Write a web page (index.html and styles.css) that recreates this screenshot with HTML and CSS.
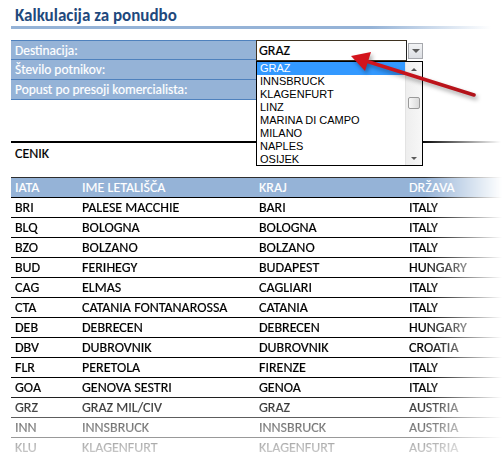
FILE: index.html
```html
<!DOCTYPE html>
<html lang="sl">
<head>
    <meta charset="UTF-8">
    <meta name="viewport" content="width=device-width, initial-scale=1.0">
    <title>Kalkulacija za ponudbo</title>
    <link rel="stylesheet" href="styles.css">
</head>
<body>
    <div class="sheet">
        <!-- Naslov z modro črto -->
        <h1 class="title">Kalkulacija za ponudbo</h1>
        <div class="title-rule"></div>

        <!-- Vnosna polja za kalkulacijo -->
        <div class="calc">
            <div class="calc-label">Destinacija:</div>
            <div class="calc-value">
                <div class="combo">
                    <div class="combo-input">GRAZ</div>
                    <div class="combo-btn"><span class="tri-down"></span></div>
                </div>
            </div>
            <div class="calc-label">Število potnikov:</div>
            <div class="calc-value"></div>
            <div class="calc-label">Popust po presoji komercialista:</div>
            <div class="calc-value"></div>

            <!-- Odprt spustni seznam -->
            <div class="list">
                <ul class="list-items">
                    <li class="selected">GRAZ</li>
                    <li>INNSBRUCK</li>
                    <li>KLAGENFURT</li>
                    <li>LINZ</li>
                    <li>MARINA DI CAMPO</li>
                    <li>MILANO</li>
                    <li>NAPLES</li>
                    <li>OSIJEK</li>
                </ul>
                <div class="list-scroll">
                    <span class="tri-up"></span>
                    <div class="thumb"></div>
                    <span class="tri-down small"></span>
                </div>
            </div>
        </div>

        <div class="black-rule"></div>
        <div class="caption">CENIK</div>

        <!-- Cenik letališč -->
        <div class="price">
            <table class="price-table">
                <colgroup>
                    <col class="c-iata">
                    <col class="c-name">
                    <col class="c-city">
                    <col class="c-country">
                </colgroup>
                <thead>
                    <tr><th>IATA</th><th>IME LETALIŠČA</th><th>KRAJ</th><th>DRŽAVA</th></tr>
                </thead>
                <tbody>
                    <tr><td>BRI</td><td>PALESE MACCHIE</td><td>BARI</td><td>ITALY</td></tr>
                    <tr><td>BLQ</td><td>BOLOGNA</td><td>BOLOGNA</td><td>ITALY</td></tr>
                    <tr><td>BZO</td><td>BOLZANO</td><td>BOLZANO</td><td>ITALY</td></tr>
                    <tr><td>BUD</td><td>FERIHEGY</td><td>BUDAPEST</td><td>HUNGARY</td></tr>
                    <tr><td>CAG</td><td>ELMAS</td><td>CAGLIARI</td><td>ITALY</td></tr>
                    <tr><td>CTA</td><td>CATANIA FONTANAROSSA</td><td>CATANIA</td><td>ITALY</td></tr>
                    <tr><td>DEB</td><td>DEBRECEN</td><td>DEBRECEN</td><td>HUNGARY</td></tr>
                    <tr><td>DBV</td><td>DUBROVNIK</td><td>DUBROVNIK</td><td>CROATIA</td></tr>
                    <tr><td>FLR</td><td>PERETOLA</td><td>FIRENZE</td><td>ITALY</td></tr>
                    <tr><td>GOA</td><td>GENOVA SESTRI</td><td>GENOA</td><td>ITALY</td></tr>
                    <tr><td>GRZ</td><td>GRAZ MIL/CIV</td><td>GRAZ</td><td>AUSTRIA</td></tr>
                    <tr><td>INN</td><td>INNSBRUCK</td><td>INNSBRUCK</td><td>AUSTRIA</td></tr>
                    <tr><td>KLU</td><td>KLAGENFURT</td><td>KLAGENFURT</td><td>AUSTRIA</td></tr>
                </tbody>
            </table>
        </div>
    </div>

    <!-- Rdeča puščica, ki kaže na izbrano vrednost -->
    <svg class="arrow" width="502" height="457" viewBox="0 0 502 457">
        <defs>
            <linearGradient id="red" x1="0" y1="0" x2="1" y2="0">
                <stop offset="0" stop-color="#d3141c"/>
                <stop offset="1" stop-color="#b0131a"/>
            </linearGradient>
        </defs>
        <line x1="474" y1="95" x2="366" y2="61" stroke="url(#red)" stroke-width="3.6" stroke-linecap="round"/>
        <polygon points="351,56 371,52 365,71" fill="#d3141c"/>
    </svg>
</body>
</html>
```

FILE: styles.css
```css
/* Osnova strani */
body {
    margin: 0;
    background-color: #ffffff;
    font-family: Carlito, Lato, "Open Sans", sans-serif;
    color: #000000;
    position: relative;
    width: 502px;
    height: 457px;
    overflow: hidden;
}

.sheet {
    padding-left: 11px;
}

/* Naslov */
.title {
    margin: 0;
    padding: 6px 0 0 4px;
    height: 20px;
    line-height: 20px;
    font-size: 17px;
    font-weight: bold;
    color: #1f497d;
}

.title-rule {
    height: 3px;
    width: 480px;
    background: linear-gradient(to right, #95b3d7 0, #95b3d7 360px, rgba(149, 179, 215, 0) 480px);
}

/* Polja za kalkulacijo */
.calc {
    position: relative;
    margin-top: 11px;
    display: grid;
    grid-template-columns: 245px 167px;
    grid-auto-rows: 20px;
    width: 412px;
}

.calc-label {
    background-color: #95b3d7;
    color: #ffffff;
    font-size: 13.4px;
    line-height: 19px;
    padding-left: 4px;
    border-bottom: 1px solid #4f81bd;
    -webkit-text-stroke: 0.15px #ffffff;
}

.calc-label:first-child {
    border-top: 1px solid #4f81bd;
}

.combo {
    display: flex;
    align-items: center;
}

.combo-input {
    width: 151px;
    height: 21px;
    box-sizing: border-box;
    border: 1px solid #3e3220;
    border-right-color: #222;
    background: #ffffff;
    font-size: 14px;
    line-height: 19px;
    padding-left: 2px;
    -webkit-text-stroke: 0.2px #000;
}

.combo-btn {
    width: 15px;
    height: 16px;
    margin-left: 1px;
    box-sizing: border-box;
    border: 1px solid #a6a8ad;
    background: linear-gradient(#f2f3f5, #dcdee3);
    display: flex;
    align-items: center;
    justify-content: center;
}

.tri-down {
    width: 0;
    height: 0;
    border-left: 4px solid transparent;
    border-right: 4px solid transparent;
    border-top: 4px solid #5b5b5b;
}

.tri-up {
    width: 0;
    height: 0;
    border-left: 3px solid transparent;
    border-right: 3px solid transparent;
    border-bottom: 3px solid #555555;
    margin-top: 6px;
}

.tri-down.small {
    border-left-width: 3px;
    border-right-width: 3px;
    border-top-width: 3px;
    margin-top: auto;
    margin-bottom: 5px;
}

/* Spustni seznam */
.list {
    position: absolute;
    left: 245px;
    top: 21px;
    width: 167px;
    height: 105px;
    box-sizing: border-box;
    border: 1px solid #000000;
    background: #ffffff;
    display: flex;
    font-family: "Liberation Sans", Arial, sans-serif;
    font-size: 11px;
}

.list-items {
    list-style: none;
    margin: 0;
    padding: 0;
    flex: 1;
}

.list-items li {
    height: 13px;
    line-height: 13px;
    padding-left: 3px;
}

.list-items li.selected {
    background-color: #3399ff;
    color: #ffffff;
}

.list-scroll {
    width: 16px;
    background: linear-gradient(to right, #eeeeee, #f7f7f7);
    border-left: 1px solid #e3e3e3;
    display: flex;
    flex-direction: column;
    align-items: center;
}

.thumb {
    width: 12px;
    height: 12px;
    margin-top: 26px;
    box-sizing: border-box;
    border: 1px solid #9a9a9a;
    border-radius: 2px;
    background: linear-gradient(to right, #f8f8f8, #dadada);
}

/* Črna črta in naslov cenika */
.black-rule {
    margin-top: 41px;
    height: 2px;
    width: 490px;
    background: linear-gradient(to right, #000 0, #000 410px, rgba(0, 0, 0, 0) 490px);
}

.caption {
    height: 33px;
    padding: 1px 0 0 4px;
    font-size: 14px;
    line-height: 20px;
    -webkit-text-stroke: 0.2px #000;
}

/* Tabela cenika */
.price {
    -webkit-mask-image: linear-gradient(to bottom, #000 210px, transparent 294px);
    mask-image: linear-gradient(to bottom, #000 210px, transparent 294px);
}

.price-table {
    width: 491px;
    table-layout: fixed;
    border-collapse: separate;
    border-spacing: 0;
    font-size: 14px;
    -webkit-mask-image: linear-gradient(to right, #000 414px, transparent 491px);
    mask-image: linear-gradient(to right, #000 414px, transparent 491px);
}

.c-iata { width: 67px; }
.c-name { width: 177px; }
.c-city { width: 150px; }
.c-country { width: 97px; }

.price-table th,
.price-table td {
    height: 19px;
    padding: 0 4px;
    line-height: 19px;
    text-align: left;
    white-space: nowrap;
    overflow: hidden;
    border-bottom: 1px solid #000000;
}

.price-table td {
    -webkit-text-stroke: 0.2px #000;
}

.price-table th {
    background-color: #95b3d7;
    color: #ffffff;
    font-weight: normal;
    border-top: 1px solid #2d2d2d;
    -webkit-text-stroke: 0.15px #ffffff;
}

/* Puščica čez vse */
.arrow {
    position: absolute;
    left: 0;
    top: 0;
    pointer-events: none;
    filter: drop-shadow(2px 3px 2px rgba(0, 0, 0, 0.35));
}
```
